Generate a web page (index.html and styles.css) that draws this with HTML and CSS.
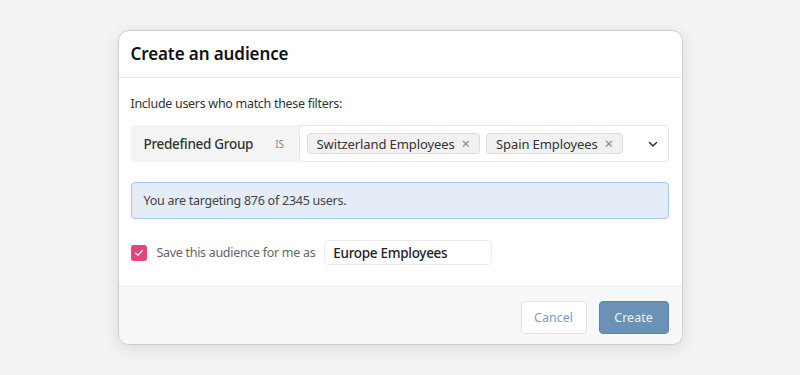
FILE: index.html
```html
<!DOCTYPE html>
<html>
<head>
<meta charset="utf-8">
<link rel="stylesheet" href="styles.css">
</head>
<body>
<div class="modal">
  <div class="modal-header">
    <h1 class="modal-title">Create an audience</h1>
  </div>
  <div class="modal-body">
    <p class="intro">Include users who match these filters:</p>
    <div class="filter">
      <div class="filter-label">
        <span class="field">Predefined Group</span>
        <span class="op">IS</span>
      </div>
      <div class="filter-values">
        <div class="chips">
          <span class="chip">Switzerland Employees <span class="chip-x">×</span></span>
          <span class="chip">Spain Employees <span class="chip-x">×</span></span>
        </div>
        <svg class="chevron" width="12" height="12" viewBox="0 0 12 12"><path d="M2.5 4.5 L6 8 L9.5 4.5" fill="none" stroke="#333" stroke-width="1.5" stroke-linecap="round" stroke-linejoin="round"/></svg>
      </div>
    </div>
    <div class="info">You are targeting 876 of 2345 users.</div>
    <div class="save-row">
      <span class="checkbox"><svg width="10" height="10" viewBox="0 0 10 10"><path d="M1.8 5.2 L4 7.2 L8.2 2.8" fill="none" stroke="#fff" stroke-width="1.3" stroke-linecap="round" stroke-linejoin="round"/></svg></span>
      <span class="save-label">Save this audience for me as</span>
      <span class="name-input">Europe Employees</span>
    </div>
  </div>
  <div class="modal-footer">
    <button class="btn btn-cancel">Cancel</button>
    <button class="btn btn-create">Create</button>
  </div>
</div>
</body>
</html>
```
FILE: styles.css
```css
html, body {
  margin: 0;
  padding: 0;
}
body {
  width: 800px;
  height: 375px;
  background: #f3f3f3;
  font-family: "Noto Sans", "Open Sans", sans-serif;
  color: #333;
  display: flex;
  align-items: center;
  justify-content: center;
}
.modal {
  width: 565px;
  height: 315px;
  box-sizing: border-box;
  background: #fff;
  border: 1px solid #cfcfcf;
  border-radius: 11px;
  box-shadow: 0 4px 16px rgba(0,0,0,0.10);
  display: flex;
  flex-direction: column;
  overflow: hidden;
}
.modal-header {
  height: 47px;
  box-sizing: border-box;
  border-bottom: 1px solid #e6e6e6;
  display: flex;
  align-items: center;
  padding: 0 12px 1px;
}
.modal-title {
  margin: 0;
  font-size: 17px;
  font-weight: 600;
  color: #111;
  letter-spacing: -0.1px;
}
.modal-body {
  flex: 1;
  padding: 17px 13px 0 12px;
  display: flex;
  flex-direction: column;
}
.intro {
  margin: 0;
  font-size: 12.5px;
  line-height: 18px;
  color: #333;
  letter-spacing: -0.3px;
}
.filter {
  margin-top: 12px;
  height: 37px;
  display: flex;
  border-radius: 4px;
  background: #f4f4f4;
}
.filter-label {
  width: 168px;
  display: flex;
  align-items: center;
  padding-left: 13px;
  box-sizing: border-box;
}
.field {
  font-size: 13.5px;
  font-weight: 500;
  color: #333;
  letter-spacing: -0.3px;
}
.op {
  margin-left: 22px;
  font-size: 10px;
  color: #888;
}
.filter-values {
  flex: 1;
  background: #fff;
  border: 1px solid #e6e6e6;
  border-radius: 4px;
  display: flex;
  align-items: center;
  padding: 0 9px 0 7px;
}
.chips {
  flex: 1;
  display: flex;
  gap: 6px;
}
.chip {
  height: 21px;
  box-sizing: border-box;
  display: inline-flex;
  align-items: center;
  padding: 0 9px 0 9px;
  background: #f1f1f1;
  border: 1px solid #dcdcdc;
  border-radius: 4px;
  font-size: 13px;
  color: #333;
  letter-spacing: -0.1px;
}
.chip-x {
  margin-left: 7px;
  color: #888;
  font-size: 15px;
  line-height: 1;
}
.chevron {
  display: block;
}
.info {
  margin-top: 20px;
  height: 37px;
  box-sizing: border-box;
  background: #e3ecf7;
  border: 1px solid #a9c6e8;
  border-radius: 4px;
  display: flex;
  align-items: center;
  padding-left: 12px;
  font-size: 12.5px;
  color: #444;
  letter-spacing: -0.25px;
}
.save-row {
  margin-top: 21px;
  height: 25px;
  display: flex;
  align-items: center;
}
.checkbox {
  width: 16px;
  height: 16px;
  border-radius: 3px;
  background: #e0457b;
  display: flex;
  align-items: center;
  justify-content: center;
}
.checkbox svg {
  display: block;
}
.save-label {
  margin-left: 10px;
  font-size: 12.5px;
  color: #666;
  letter-spacing: -0.3px;
}
.name-input {
  margin-left: 9px;
  width: 168px;
  height: 25px;
  box-sizing: border-box;
  border: 1px solid #ececec;
  border-radius: 4px;
  display: flex;
  align-items: center;
  padding-left: 8px;
  font-size: 13.5px;
  font-weight: 500;
  color: #222;
  letter-spacing: -0.3px;
}
.modal-footer {
  height: 58px;
  box-sizing: border-box;
  background: #f7f8fa;
  border-top: 1px solid #e8eaed;
  display: flex;
  align-items: flex-start;
  justify-content: flex-end;
  gap: 12px;
  padding: 14px 13px 0;
}
.btn {
  height: 33px;
  border-radius: 4px;
  font-family: inherit;
  font-size: 12.5px;
  padding: 0;
}
.btn-cancel {
  width: 66px;
  background: #fff;
  border: 1px solid #e2e2e2;
  color: #7b9cc2;
}
.btn-create {
  width: 70px;
  background: #6b91b6;
  border: 1px solid #5e84ab;
  color: #eef3f8;
}
```
